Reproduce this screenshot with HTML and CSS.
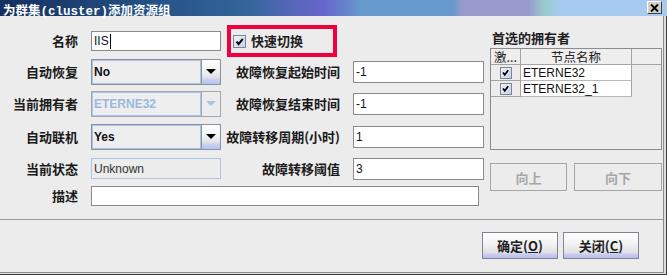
FILE: index.html
```html
<!DOCTYPE html>
<html lang="zh">
<head>
<meta charset="utf-8">
<title>为群集(cluster)添加资源组</title>
<link rel="stylesheet" href="styles.css">
</head>
<body>
<div class="window">
  <div class="titlebar">
    <span class="title">为群集<span class="mono">(cluster)</span>添加资源组</span>
    <span class="close"><svg width="9" height="8" viewBox="0 0 9 8"><path d="M1 0.5 L8 7.5 M8 0.5 L1 7.5" stroke="#000" stroke-width="2" fill="none"/></svg></span>
  </div>
  <div class="outer">
    <div class="frame">
      <div class="main">
        <div class="form">
          <div class="lbl">名称</div>
          <div class="field name">IIS<span class="caret"></span></div>
          <div class="quick">
            <span class="cb"><svg width="11" height="11" viewBox="0 0 11 11"><path d="M2.5 5.5 L4.6 8.2 L8.8 2.8" stroke="#000" stroke-width="2" fill="none"/></svg></span>
            <span class="quick-label">快速切换</span>
          </div>
          <div></div>

          <div class="lbl">自动恢复</div>
          <div class="combo"><span class="value">No</span><span class="arrow"><i class="tri"></i></span></div>
          <div class="lbl">故障恢复起始时间</div>
          <div class="field tall">-1</div>

          <div class="lbl">当前拥有者</div>
          <div class="combo disabled"><span class="value">ETERNE32</span><span class="arrow"><i class="tri"></i></span></div>
          <div class="lbl">故障恢复结束时间</div>
          <div class="field tall">-1</div>

          <div class="lbl">自动联机</div>
          <div class="combo"><span class="value">Yes</span><span class="arrow"><i class="tri"></i></span></div>
          <div class="lbl">故障转移周期(小时)</div>
          <div class="field tall">1</div>

          <div class="lbl">当前状态</div>
          <div class="field status">Unknown</div>
          <div class="lbl">故障转移阈值</div>
          <div class="field tall">3</div>

          <div class="lbl">描述</div>
          <div class="field desc"></div>
        </div>
        <div class="owners">
          <div class="owners-title">首选的拥有者</div>
          <div class="table">
            <div class="trow head">
              <div class="cell c1">激...</div>
              <div class="cell c2">节点名称</div>
              <div class="cell c3"></div>
            </div>
            <div class="trow">
              <div class="cell c1"><span class="cb small"><svg width="9" height="9" viewBox="0 0 9 9"><path d="M2 4.5 L3.8 6.8 L7.2 2.2" stroke="#000" stroke-width="1.8" fill="none"/></svg></span></div>
              <div class="cell c2 name-cell">ETERNE32</div>
            </div>
            <div class="trow">
              <div class="cell c1"><span class="cb small"><svg width="9" height="9" viewBox="0 0 9 9"><path d="M2 4.5 L3.8 6.8 L7.2 2.2" stroke="#000" stroke-width="1.8" fill="none"/></svg></span></div>
              <div class="cell c2 name-cell">ETERNE32_1</div>
            </div>
          </div>
          <div class="move-btns">
            <button class="btn-dis">向上</button>
            <button class="btn-dis">向下</button>
          </div>
        </div>
      </div>
      <div class="sep"></div>
      <div class="actions">
        <button class="btn">确定(<u>O</u>)</button>
        <button class="btn">关闭(<u>C</u>)</button>
      </div>
    </div>
  </div>
</div>
</body>
</html>
```

FILE: styles.css
```css
html, body {
  margin: 0;
  padding: 0;
  background: #ececec;
}

body {
  font-family: "Noto Sans CJK SC", "Liberation Sans", sans-serif;
  color: #1e1e1e;
}

.window {
  width: 667px;
  height: 275px;
  display: flex;
  flex-direction: column;
}

.titlebar {
  height: 16px;
  flex: none;
  display: flex;
  justify-content: space-between;
  align-items: flex-start;
  padding-right: 5px;
  position: relative;
  z-index: 1;
  background: linear-gradient(90deg, #14305e 0px, #28558a 170px, #33669a 250px, #5a66bb 295px, #6666cc 325px, #6699cc 360px, #6699cc 452px, #9999cc 462px, #9999cc 528px, #99cccc 545px, #a6caf0 560px, #a6caf0 100%);
}

.title {
  display: block;
  color: #fff;
  font-weight: 700;
  font-size: 12.5px;
  line-height: normal;
  padding-left: 3px;
  white-space: nowrap;
}

.mono {
  font-family: "Liberation Mono", monospace;
}

.close {
  margin-top: 1px;
  width: 15px;
  height: 13px;
  box-sizing: border-box;
  background: #d4d0c8;
  border-top: 1px solid #fff;
  border-left: 1px solid #fff;
  border-right: 1px solid #404040;
  border-bottom: 1px solid #404040;
  display: flex;
  align-items: center;
  justify-content: center;
}

.outer {
  flex: 1;
  background: #dcdcdc;
  border-right: 1px solid #404040;
  border-bottom: 1px solid #404040;
  padding: 0 2px 1px 0;
}

.frame {
  height: 100%;
  box-sizing: border-box;
  background: #ececec;
  border-right: 1px solid #8c8c8c;
  border-bottom: 1px solid #8c8c8c;
  display: flex;
  flex-direction: column;
}

.main {
  display: flex;
  height: 203px;
  flex: none;
}

.form {
  display: grid;
  grid-template-columns: 91px 130px 132px 131px;
  grid-template-rows: 32px 30px 34px 32px 31px 24px;
  align-items: center;
  padding-top: 9px;
}

.lbl {
  text-align: right;
  padding-right: 13px;
  font-size: 13px;
  font-weight: 700;
  line-height: 16px;
  white-space: nowrap;
  color: #1a1a1a;
}

.field {
  height: 20px;
  box-sizing: border-box;
  border: 1px solid #8a8a8a;
  background: #fff;
  font-family: "Liberation Sans", sans-serif;
  font-size: 12px;
  line-height: 18px;
  padding-left: 2px;
  color: #111;
  display: flex;
  align-items: center;
}

.field.tall {
  height: 22px;
}

.caret {
  display: inline-block;
  width: 1px;
  height: 15px;
  background: #000;
  margin-left: 1px;
}

.field.status {
  height: 21px;
  background: #ececec;
  border-color: #a9c5e6;
  color: #333;
}

.field.desc {
  grid-column: 2 / 5;
  width: 388px;
}

.quick {
  margin-left: 6px;
  width: 110px;
  height: 32px;
  box-sizing: border-box;
  border: 4px solid #f0003c;
  display: flex;
  align-items: center;
  padding-left: 2px;
  gap: 5px;
}

.quick-label {
  font-size: 13px;
  font-weight: 700;
  line-height: 16px;
}

.cb {
  width: 13px;
  height: 13px;
  box-sizing: border-box;
  border: 1px solid #7b8593;
  background: linear-gradient(135deg, #eef1f8 0%, #dde3f1 50%, #c5cfe8 100%);
  display: flex;
  align-items: center;
  justify-content: center;
  flex: none;
}

.cb.small {
  width: 12px;
  height: 12px;
}

.combo {
  height: 26px;
  box-sizing: border-box;
  border: 1px solid #8a929c;
  display: flex;
}

.combo .value {
  flex: 1;
  border: 1px solid #a9c5e6;
  background: #eeeeee;
  font-family: "Liberation Sans", sans-serif;
  font-weight: 700;
  font-size: 12px;
  line-height: 22px;
  padding-left: 1px;
  color: #111;
}

.combo .arrow {
  width: 18px;
  border-left: 1px solid #8a929c;
  background: linear-gradient(#fefefe 0%, #f2f3f5 45%, #e0e2e6 72%, #c9cff2 82%, #b9c1ef 100%);
  display: flex;
  align-items: center;
  justify-content: center;
  padding-bottom: 2px;
}

.tri {
  width: 0;
  height: 0;
  border-left: 5px solid transparent;
  border-right: 5px solid transparent;
  border-top: 5px solid #000;
}

.combo.disabled {
  border-color: #a2a8b0;
}

.combo.disabled .value {
  color: #9bb9de;
}

.combo.disabled .arrow {
  border-left-color: #a2a8b0;
  background: #ececec;
}

.combo.disabled .tri {
  border-top-color: #a9c4e6;
}

.owners {
  width: 172px;
  margin-left: 6px;
  padding-top: 13px;
  display: flex;
  flex-direction: column;
}

.owners-title {
  font-size: 13px;
  font-weight: 700;
  line-height: 17px;
  padding-left: 2px;
}

.table {
  margin-top: 2px;
  height: 102px;
  box-sizing: border-box;
  border: 1px solid #8c8c8c;
  background: #ececec;
}

.trow {
  display: grid;
  grid-template-columns: 30px 111px 1fr;
  height: 16px;
}

.cell {
  box-sizing: border-box;
  border-right: 1px solid #a4a4a4;
  border-bottom: 1px solid #a4a4a4;
  height: 16px;
  display: flex;
  align-items: center;
}

.head .cell {
  justify-content: center;
  font-size: 12.5px;
  line-height: 15px;
  color: #222;
  background: #eeeeee;
  white-space: nowrap;
}

.head .c3 {
  border-right: none;
}

.c1 {
  justify-content: center;
}

.name-cell {
  background: #fff;
  font-family: "Liberation Sans", sans-serif;
  font-size: 12px;
  padding-left: 2px;
  color: #111;
  border-bottom-color: #b8b8b8;
}

.move-btns {
  margin-top: 13px;
  display: grid;
  grid-template-columns: 77px 1fr;
  gap: 7px;
}

.btn-dis {
  height: 28px;
  border: 1px solid #a5a5a5;
  background: #ececec;
  color: #a6a6a6;
  font-family: "Noto Sans CJK SC", sans-serif;
  font-size: 13px;
  font-weight: 700;
  padding: 0;
}

.sep {
  height: 1px;
  background: #9a9a9a;
  flex: none;
}

.actions {
  display: flex;
  justify-content: flex-end;
  gap: 5px;
  padding: 12px 24px 0 0;
}

.btn {
  width: 76px;
  height: 27px;
  box-sizing: border-box;
  border: 1px solid #7d8691;
  background: linear-gradient(#ffffff 0%, #f4f4f5 40%, #dfe1e5 78%, #c6ccf2 86%, #b5bdf0 100%);
  font-family: "Noto Sans CJK SC", sans-serif;
  font-size: 13px;
  font-weight: 700;
  color: #1e1e1e;
  padding: 0;
}
```
